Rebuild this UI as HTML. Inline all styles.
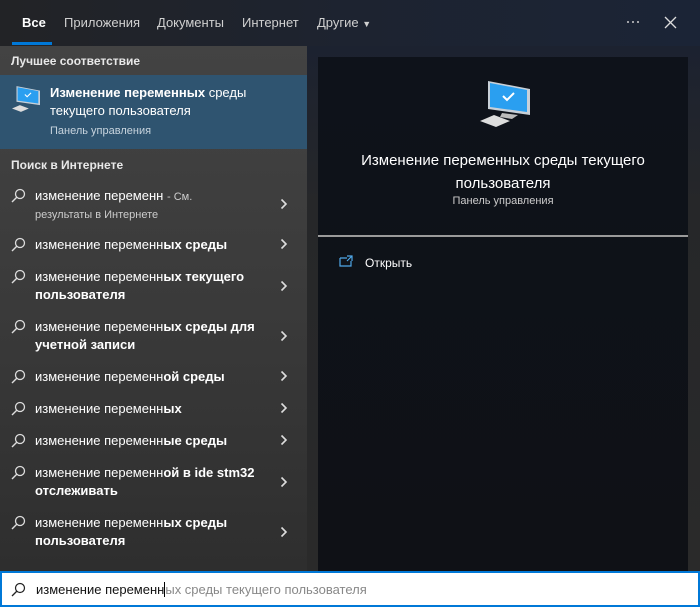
<!DOCTYPE html>
<html><head><meta charset="utf-8"><style>
*{margin:0;padding:0;box-sizing:border-box}
body{width:700px;height:607px;overflow:hidden;font-family:"Segoe UI","Liberation Sans","Noto Sans CJK SC",sans-serif;color:#fff;background:#222;position:relative}
.top{position:absolute;left:0;top:0;width:700px;height:46px;background:linear-gradient(90deg,#222326 0%,#1d2330 50%,#1b2436 100%)}
.tab{position:absolute;top:15px;font-size:13px;color:#d0d0d0}
.left{position:absolute;left:0;top:46px;width:307px;height:525px;background:linear-gradient(180deg,#434343 0%,#3a3a3a 50%,#2e2e2e 100%)}
.right{position:absolute;left:307px;top:46px;width:393px;height:525px;background:linear-gradient(180deg,#1c2230 0%,#262729 30%,#2a2a2a 100%)}
.card{position:absolute;left:318px;top:57px;width:370px;height:514px;background:linear-gradient(180deg,#0e121a 0%,#0f1116 100%)}
.hdr{position:absolute;left:11px;font-size:12px;font-weight:bold;color:#e8e8e8}
.best{position:absolute;left:0;top:75px;width:307px;height:74px;background:#2f5470}
.item{position:absolute;left:35px;font-size:13px;line-height:18px;color:#fff;font-weight:bold;width:240px}
.item span{font-weight:normal}
.mag{position:absolute;left:10px;width:16px;height:16px}
.chev{position:absolute;left:280px;width:8px;height:12px}
.search{position:absolute;left:0;top:571px;width:700px;height:36px;background:#fff;border:2px solid #0078d7}
</style></head><body>
<div class="top">
 <div class="tab" style="left:22px;color:#fff;font-weight:bold">Все</div>
 <div style="position:absolute;left:12px;top:42px;width:40px;height:3px;background:#0078d7"></div>
 <div class="tab" style="left:64px">Приложения</div>
 <div class="tab" style="left:157px">Документы</div>
 <div class="tab" style="left:242px">Интернет</div>
 <div class="tab" style="left:317px">Другие <span style="font-size:9px">▼</span></div>
 <svg style="position:absolute;left:626px;top:20px" width="14" height="4"><circle cx="2" cy="2" r="1" fill="#ccc"/><circle cx="7" cy="2" r="1" fill="#ccc"/><circle cx="12" cy="2" r="1" fill="#ccc"/></svg>
 <svg style="position:absolute;left:664px;top:16px" width="13" height="13"><path d="M1 1L12 12M12 1L1 12" stroke="#ddd" stroke-width="1.3"/></svg>
</div>
<div class="left"></div>
<div class="right"></div>
<div class="card">
 <svg style="position:absolute;left:160px;top:22px" width="54" height="50" viewBox="0 0 54 50">
  <polygon points="10,2 52,10 52,36 10,30" fill="#c8d0d8"/>
  <polygon points="12,4 49,11 49,33 12,28" fill="#2a9ff0"/>
  <path d="M25 17l4 4 7-7" stroke="#fff" stroke-width="2" fill="none"/>
  <polygon points="24,34 40,36 34,40 22,38" fill="#bbb"/>
  <polygon points="2,42 16,36 32,42 18,48" fill="#ddd"/>
 </svg>
 <div style="position:absolute;left:0;top:92px;width:370px;text-align:center;font-size:15px;line-height:23px">Изменение переменных среды текущего<br>пользователя</div>
 <div style="position:absolute;left:0;top:138px;width:370px;text-align:center;font-size:11px;color:#ccc">Панель управления</div>
 <div style="position:absolute;left:0;top:178px;width:370px;height:2px;background:#9a9a9a"></div>
 <svg style="position:absolute;left:21px;top:198px" width="14" height="12"><path d="M1 3h7M1 3v8h11V6M8 1h5v5M13 1l-5 5" stroke="#4fa8e8" fill="none" stroke-width="1.2"/></svg>
 <div style="position:absolute;left:47px;top:199px;font-size:12px">Открыть</div>
</div>
<div class="hdr" style="top:54px">Лучшее соответствие</div>
<div class="best">
 <svg style="position:absolute;left:10px;top:10px" width="32" height="28" viewBox="0 0 54 50"><polygon points="10,2 52,10 52,36 10,30" fill="#c8d0d8"/><polygon points="12,4 49,11 49,33 12,28" fill="#2a9ff0"/><path d="M25 17l4 4 7-7" stroke="#fff" stroke-width="2" fill="none"/><polygon points="2,42 16,36 32,42 18,48" fill="#ddd"/></svg>
 <div style="position:absolute;left:50px;top:9px;font-size:13px;line-height:18px;font-weight:bold">Изменение переменных <span style="font-weight:normal">среды<br>текущего пользователя</span></div>
 <div style="position:absolute;left:50px;top:50px;font-size:11px;color:#c8d4de">Панель управления</div>
</div>
<div class="hdr" style="top:158px">Поиск в Интернете</div>
<svg width="0" height="0" style="position:absolute"><defs><g id="m"><circle cx="10" cy="6" r="4.5" stroke="#ddd" stroke-width="1.3" fill="none"/><path d="M7 9L2 14" stroke="#ddd" stroke-width="1.4"/></g><path id="c" d="M1.5 1.5L6 6L1.5 10.5" stroke="#ddd" stroke-width="1.6" fill="none"/></defs></svg>
<svg class="mag" style="top:188px"><use href="#m"/></svg>
<div class="item" style="top:187px"><span>изменение переменн</span> <span style="color:#ccc;font-size:11px">- См.</span></div>
<div class="item" style="top:206px;font-size:11px;font-weight:normal;color:#ccc">результаты в Интернете</div>
<svg class="chev" style="top:198px"><use href="#c"/></svg>

<svg class="mag" style="top:237px"><use href="#m"/></svg>
<div class="item" style="top:236px"><span>изменение переменн</span>ых среды</div>
<svg class="chev" style="top:238px"><use href="#c"/></svg>

<svg class="mag" style="top:269px"><use href="#m"/></svg>
<div class="item" style="top:268px"><span>изменение переменн</span>ых текущего пользователя</div>
<svg class="chev" style="top:280px"><use href="#c"/></svg>

<svg class="mag" style="top:319px"><use href="#m"/></svg>
<div class="item" style="top:318px"><span>изменение переменн</span>ых среды для учетной записи</div>
<svg class="chev" style="top:330px"><use href="#c"/></svg>

<svg class="mag" style="top:369px"><use href="#m"/></svg>
<div class="item" style="top:368px"><span>изменение переменн</span>ой среды</div>
<svg class="chev" style="top:370px"><use href="#c"/></svg>

<svg class="mag" style="top:401px"><use href="#m"/></svg>
<div class="item" style="top:400px"><span>изменение переменн</span>ых</div>
<svg class="chev" style="top:402px"><use href="#c"/></svg>

<svg class="mag" style="top:433px"><use href="#m"/></svg>
<div class="item" style="top:432px"><span>изменение переменн</span>ые среды</div>
<svg class="chev" style="top:434px"><use href="#c"/></svg>

<svg class="mag" style="top:465px"><use href="#m"/></svg>
<div class="item" style="top:464px"><span>изменение переменн</span>ой в ide stm32 отслеживать</div>
<svg class="chev" style="top:476px"><use href="#c"/></svg>

<svg class="mag" style="top:515px"><use href="#m"/></svg>
<div class="item" style="top:514px"><span>изменение переменн</span>ых среды пользователя</div>
<svg class="chev" style="top:526px"><use href="#c"/></svg>

<div class="search">
 <svg style="position:absolute;left:8px;top:9px" width="16" height="16"><circle cx="10" cy="6" r="4.5" stroke="#222" stroke-width="1.2" fill="none"/><path d="M7 9L2 14" stroke="#222" stroke-width="1.3"/></svg>
 <div style="position:absolute;left:34px;top:9px;font-size:13px;color:#111">изменение переменн<span style="border-left:1px solid #000"></span><span style="color:#888">ых среды текущего пользователя</span></div>
</div>
</body></html>
